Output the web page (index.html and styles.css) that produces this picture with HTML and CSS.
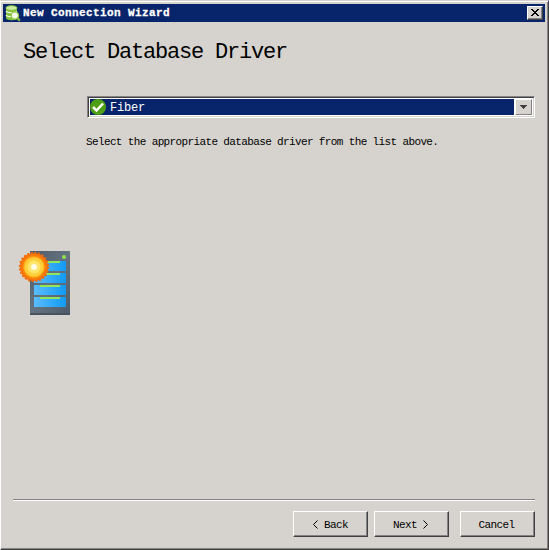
FILE: index.html
```html
<!DOCTYPE html>
<html lang="en">
<head>
<meta charset="utf-8">
<title>New Connection Wizard</title>
<link rel="stylesheet" href="styles.css">
</head>
<body>
<div class="window">
  <header class="titlebar">
    <svg class="app-icon" width="16" height="17" viewBox="0 0 16 17">
      <path d="M1 3v10c0 3 11 3 11 0V3z" fill="#7fbe38"/>
      <path d="M1 6c1 2.2 10 2.2 11 0M1 10c1 2.2 10 2.2 11 0" fill="none" stroke="#f2fae5" stroke-width="1.2"/>
      <ellipse cx="6.5" cy="3" rx="5.5" ry="2.3" fill="#cdeaa0" stroke="#8cc63f"/>
      <path d="M12.3 13l2.5 2.8" stroke="#8cc63f" stroke-width="2.2"/>
      <circle cx="9.8" cy="10.5" r="3.7" fill="#f4fbe8" stroke="#8cc63f" stroke-width="1.3"/>
    </svg>
    <span class="caption">New Connection Wizard</span>
    <button class="close" aria-label="Close">
      <svg width="8" height="7" viewBox="0 0 8 7" shape-rendering="crispEdges"><path d="M0 0h2v1h1v1h2V1h1V0h2v1H7v1H6v1H5v1h1v1h1v1h1v1H6V6H5V5H3v1H2v1H0V6h1V5h1V4h1V3H2V2H1V1H0z" fill="#000"/></svg>
    </button>
  </header>
  <h1>Select Database Driver</h1>
  <main>
    <svg class="server" width="54" height="66" viewBox="0 0 54 66">
      <defs>
        <linearGradient id="blue"><stop stop-color="#5bbcff"/><stop offset="1" stop-color="#119af3"/></linearGradient>
        <linearGradient id="case" x2="1" y2="1"><stop stop-color="#4d5b68"/><stop offset=".5" stop-color="#657380"/><stop offset="1" stop-color="#4d5b68"/></linearGradient>
        <radialGradient id="sun"><stop offset=".6" stop-color="#ff9a10"/><stop offset="1" stop-color="#f36a08"/></radialGradient>
      </defs>
      <path d="M12 1h40v64H12z" fill="url(#case)"/>
      <path d="M12 63h40v2H12z" fill="#465360"/>
      <circle cx="46" cy="7" r="2" fill="#92e34b"/>
      <g fill="url(#blue)"><path d="M16 11h32v10H16z"/><path d="M16 23h32v10H16z"/><path d="M16 35h32v10H16z"/><path d="M16 47h32v10H16z"/></g>
      <path d="M22 11h20v2H22zM22 23h20v2H22zM22 35h20v2H22zM22 47h20v2H22z" fill="#91e75b"/>
      <circle cx="16" cy="17" r="14" fill="url(#sun)"/>
      <circle cx="16" cy="17" r="14.3" fill="none" stroke="#f36a08" stroke-width="1.8" stroke-dasharray="2 1.744"/>
      <circle cx="16" cy="17" r="10.5" fill="#ffb21b"/>
      <circle cx="16" cy="17" r="9.5" fill="#ffcf3a"/>
      <circle cx="16" cy="17" r="6.5" fill="#ffe56a"/>
      <circle cx="16" cy="17" r="3" fill="#fffde8"/>
    </svg>
    <section class="content">
      <div class="combo">
        <div class="selected">
          <svg width="16" height="16" viewBox="0 0 16 16"><circle cx="8" cy="8" r="8" fill="#4f9f16"/><path d="M3 8l3.5 3.5L13 4.5" fill="none" stroke="#fff" stroke-width="2.5"/></svg>
          <span>Fiber</span>
        </div>
        <div class="arrow"><svg width="7" height="4" viewBox="0 0 7 4" shape-rendering="crispEdges"><path d="M0 0h7v1H6v1H5v1H4v1H3V3H2V2H1V1H0z" fill="#404040"/></svg></div>
      </div>
      <p>Select the appropriate database driver from the list above.</p>
    </section>
  </main>
  <footer>
    <button class="btn"><svg class="back" width="5" height="9" viewBox="0 0 5 9"><path d="M4.5 .5l-4 4 4 4"/></svg><span>Back</span></button>
    <button class="btn next"><span>Next</span><svg width="5" height="9" viewBox="0 0 5 9"><path d="M.5 .5l4 4-4 4"/></svg></button>
    <button class="btn cancel"><span>Cancel</span></button>
  </footer>
</div>
</body>
</html>
```
FILE: styles.css
```css
* { box-sizing: border-box; }
body { margin: 0; background: #d6d3ce; font-family: "Liberation Mono", monospace; color: #000; }
.window {
  width: 549px; height: 550px; display: flex; flex-direction: column;
  background: #d6d3ce; border: 1px solid #d6d3ce; border-right-color: #424142; border-bottom-color: #424142;
  box-shadow: inset 1px 1px #fff, inset -1px -1px #848284;
}
.window { border-left-color: #fff; box-shadow: inset 0 1px #fff, inset -1px -1px #848284; }
.titlebar {
  height: 18px; margin: 3px 3px 0 2px; padding: 0 2px 0 2px; flex: none;
  display: flex; align-items: center; background: #08246b; color: #fff;
}
.app-icon { flex: none; }
.caption { margin-left: 2px; font-size: 11px; line-height: 18px; font-weight: bold; letter-spacing: .4px; white-space: pre; -webkit-text-stroke: .3px #fff; }
.close {
  width: 16px; height: 14px; margin-left: auto; padding: 0 0 1px; border: 1px solid; border-color: #fff #424142 #424142 #fff;
  box-shadow: inset -1px -1px #848284; background: #d6d3ce; display: flex; align-items: center; justify-content: center;
}
h1 { margin: 18px 0 -1px 22px; font-size: 22px; line-height: 26px; font-weight: normal; letter-spacing: -1.2px; white-space: pre; flex: none; }
main { flex: 1; display: flex; padding: 31px 13px 0 17px; }
.server { margin-top: 154px; flex: none; }
.content { flex: 1; margin-left: 15px; }
.combo {
  height: 22px; display: flex; border: 1px solid; border-color: #848284 #fff #fff #848284;
  box-shadow: inset 1px 1px #424142, inset -1px -1px #d6d3ce; background: #fff; padding: 2px;
}
.selected { flex: 1; margin: 0 1px 0 0; display: flex; align-items: center; gap: 4px; background: #08246b; color: #fff; font-size: 12px; letter-spacing: -.2px; }
.selected span { padding-top: 2px; }
.arrow { width: 17px; border: 1px solid; border-color: #fff #848284 #848284 #fff; background: #d6d3ce; display: flex; align-items: center; justify-content: center; }
p { margin: 16px 0 0 -1px; font-size: 11px; line-height: 16px; letter-spacing: -.63px; white-space: pre; }
footer {
  height: 50px; margin: 0 13px 0 12px; flex: none; padding-top: 10px;
  border-top: 1px solid #848284; box-shadow: inset 0 1px #fff;
  display: flex; justify-content: flex-end; gap: 6px;
}
.btn {
  width: 75px; height: 26px; padding: 0; margin-top: 1px; border: 1px solid; border-color: #fff #424142 #424142 #fff;
  box-shadow: inset -1px -1px #848284; background: #d6d3ce; color: #000;
  display: flex; align-items: center; justify-content: center; gap: 6px;
  font: 11px/16px "Liberation Mono", monospace; letter-spacing: -.601px;
}
.btn svg { fill: none; stroke: #000; stroke-width: 1; }
.btn span { padding-top: 1px; }
.next { padding-right: 2px; }
.cancel { margin-left: 5px; padding-right: 2px; }
```
